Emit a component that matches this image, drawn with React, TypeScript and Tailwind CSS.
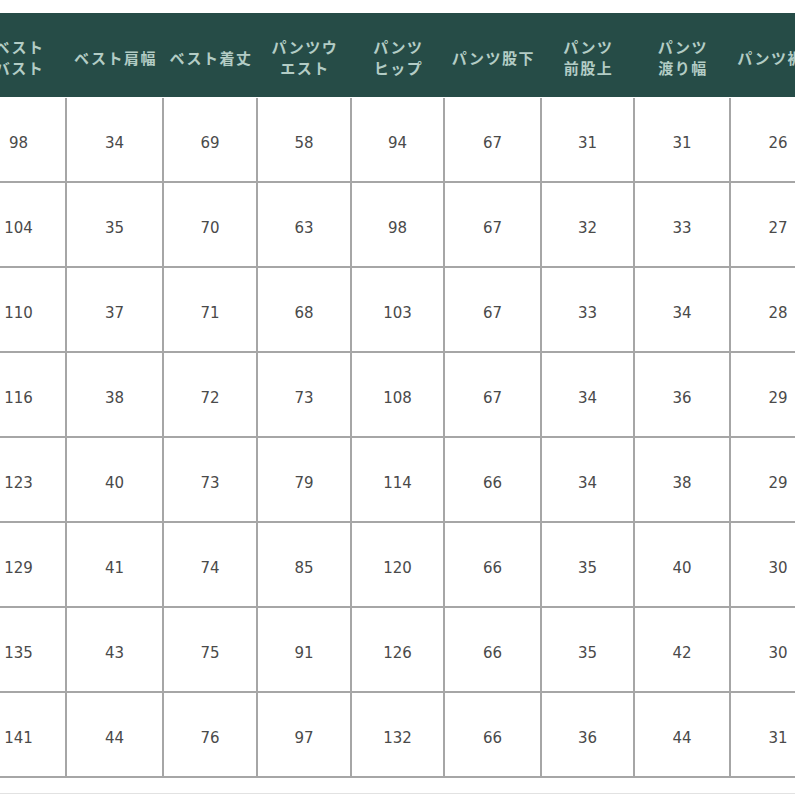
import React from "react";

const widths = [95, 97, 94, 94, 93, 97, 93, 96, 96];

const headers: string[][] = [
  ["ベスト", "バスト"],
  ["ベスト肩幅"],
  ["ベスト着丈"],
  ["パンツウ", "エスト"],
  ["パンツ", "ヒップ"],
  ["パンツ股下"],
  ["パンツ", "前股上"],
  ["パンツ", "渡り幅"],
  ["パンツ裾幅"],
];

const rows: string[][] = [
  ["98", "34", "69", "58", "94", "67", "31", "31", "26"],
  ["104", "35", "70", "63", "98", "67", "32", "33", "27"],
  ["110", "37", "71", "68", "103", "67", "33", "34", "28"],
  ["116", "38", "72", "73", "108", "67", "34", "36", "29"],
  ["123", "40", "73", "79", "114", "66", "34", "38", "29"],
  ["129", "41", "74", "85", "120", "66", "35", "40", "30"],
  ["135", "43", "75", "91", "126", "66", "35", "42", "30"],
  ["141", "44", "76", "97", "132", "66", "36", "44", "31"],
];

export default function App() {
  return (
    <div className="w-[795px] h-[795px] overflow-hidden bg-white pt-[13px] relative">
      <div className="-ml-[28px] w-[855px]">
        <div className="flex h-[84px] bg-[#264c47]">
          {headers.map((h, i) => (
            <div
              key={i}
              style={{ width: widths[i] }}
              className="shrink-0 flex flex-col items-center justify-center pt-[4px] text-[#b3ccc5] text-[15px] leading-[21px] tracking-[1.5px] font-bold whitespace-nowrap [font-family:'Noto_Sans_CJK_JP',sans-serif]"
            >
              {h.map((t, j) => (
                <span key={j}>{t}</span>
              ))}
            </div>
          ))}
        </div>
        <div className="h-[1px]" />
        {rows.map((r, ri) => (
          <div key={ri} className="flex h-[85px] border-b-2 border-[#a6a6a6]">
            {r.map((v, ci) => (
              <div
                key={ci}
                style={{ width: widths[ci] }}
                className="shrink-0 flex items-center justify-center pt-[8px] border-r-2 border-[#a6a6a6] text-[15px] text-[#4a4a4a] [font-family:'DejaVu_Sans',sans-serif]"
              >
                {v}
              </div>
            ))}
          </div>
        ))}
        <div className="h-[15px]" />
        <div className="h-[1px] bg-[#e2e2e2]" />
      </div>
    </div>
  );
}
